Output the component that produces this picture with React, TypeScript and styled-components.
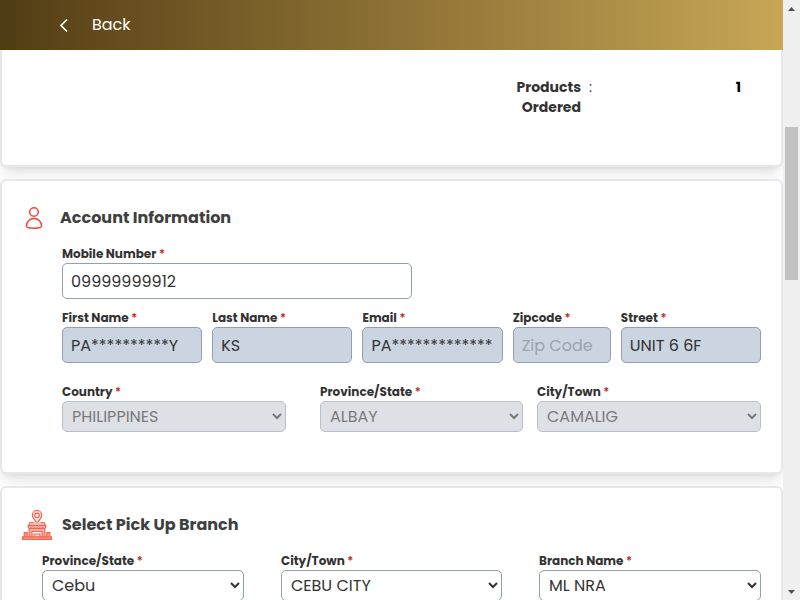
import React, { useId } from "react";
import styled, { createGlobalStyle, css } from "styled-components";

const Global = createGlobalStyle`
  *, *::before, *::after { box-sizing: border-box; }
  html, body { margin: 0; padding: 0; overflow: hidden; }
  body { background: #fff; color: #333; font-family: Poppins, Inter, "Open Sans", sans-serif; }
  button, input, select { font-family: inherit; }
`;

const Shell = styled.div`
  display: flex;
  height: 100vh;
  overflow: hidden;
`;

const Page = styled.div`
  display: flex;
  flex: 1;
  flex-direction: column;
  min-width: 0;
`;

const TopBar = styled.header`
  display: flex;
  flex: none;
  align-items: center;
  height: 50px;
  padding: 0 56px;
  background: linear-gradient(90deg, #4f3c13 0%, #5a4318 6%, #c7a656 100%);
`;

const BackButton = styled.button`
  display: flex;
  align-items: center;
  gap: 20px;
  padding: 0;
  border: 0;
  background: none;
  color: #fff;
  font-size: 16px;
  font-weight: 400;
  line-height: 24px;
`;

const Content = styled.main`
  flex: 1;
  min-height: 0;
  overflow: hidden;
`;

const Card = styled.section<{ $continued?: boolean }>`
  margin: 0 0 12px;
  padding: 22px 20px 40px;
  border: 2px solid #e5e7eb;
  border-radius: 6px;
  background: #fff;
  box-shadow: 0 10px 15px -3px rgba(0, 0, 0, 0.1), 0 4px 6px -4px rgba(0, 0, 0, 0.1);
  ${(p) =>
    p.$continued &&
    css`
      padding: 27px 40px 48px;
      border-top: 0;
      border-top-left-radius: 0;
      border-top-right-radius: 0;
    `}
`;

const SummaryRow = styled.dl`
  display: grid;
  grid-template-columns: 1fr 80px 4px 140px;
  column-gap: 8px;
  margin: 0;
  font-size: 14px;
  line-height: 20px;
`;

const SummaryTerm = styled.dt`
  grid-column: 2;
  font-weight: 700;
  text-align: right;
`;

const SummaryValue = styled.dd`
  margin: 0;
  color: #000;
  font-weight: 700;
  text-align: right;
`;

const CardHeader = styled.div<{ $gap: number }>`
  display: flex;
  align-items: center;
  gap: ${(p) => p.$gap}px;
  height: 30px;
`;

const CardTitle = styled.h2`
  margin: 0;
  color: #404040;
  font-size: 16px;
  font-weight: 700;
  line-height: 24px;
`;

const Fields = styled.div<{ $columns: string; $gap: number; $top?: number; $left?: number }>`
  display: grid;
  grid-template-columns: ${(p) => p.$columns};
  column-gap: ${(p) => p.$gap}px;
  padding: ${(p) => p.$top ?? 10}px 0 0 ${(p) => p.$left ?? 40}px;
`;

const FieldBox = styled.div<{ $inset?: boolean }>`
  display: flex;
  flex-direction: column;
  min-width: 0;
  padding-right: ${(p) => (p.$inset ? 20 : 0)}px;
`;

const Label = styled.label`
  font-size: 12px;
  font-weight: 700;
  line-height: 18px;
  white-space: nowrap;
`;

const Required = styled.span`
  color: #b91c1c;
  font-weight: 500;
`;

const control = css`
  width: 100%;
  border: 1px solid #949eb2;
  border-radius: 5px;
  background: #fff;
  color: #333;
  font-size: 16px;
  font-weight: 400;
  line-height: 24px;
`;

const TextInput = styled.input`
  ${control}
  height: 36px;
  padding: 0 8px;
  &:disabled { background: #cbd5e1; }
  &::placeholder { color: #9ca3af; opacity: 1; }
`;

const Select = styled.select`
  ${control}
  height: 31px;
  padding: 0 6px 0 5px;
  &:disabled { background: #cbd0d7; opacity: 0.65; }
`;

const ScrollTrack = styled.div`
  display: flex;
  flex: none;
  flex-direction: column;
  align-items: center;
  width: 17px;
  padding: 7px 0 6px;
  background: #f0f0f0;
`;

const ScrollArrow = styled.svg`
  display: block;
  flex: none;
`;

const ScrollRail = styled.div`
  flex: 1;
  width: 13px;
  padding-top: 116px;
`;

const ScrollThumb = styled.div`
  height: 153px;
  background: #c1c1c1;
`;

function RequiredLabel({ id, text }: { id: string; text: string }) {
  return (
    <Label htmlFor={id}>
      {text} <Required>*</Required>
    </Label>
  );
}

type TextFieldProps = { label: string; value?: string; placeholder?: string; disabled?: boolean };

function TextField({ label, value = "", placeholder, disabled }: TextFieldProps) {
  const id = useId();
  return (
    <FieldBox>
      <RequiredLabel id={id} text={label} />
      <TextInput id={id} defaultValue={value} placeholder={placeholder} disabled={disabled} />
    </FieldBox>
  );
}

type SelectFieldProps = { label: string; value: string; disabled?: boolean; inset?: boolean };

function SelectField({ label, value, disabled, inset }: SelectFieldProps) {
  const id = useId();
  return (
    <FieldBox $inset={inset}>
      <RequiredLabel id={id} text={label} />
      <Select id={id} defaultValue={value} disabled={disabled}>
        <option value={value}>{value}</option>
      </Select>
    </FieldBox>
  );
}

const ChevronLeft = () => (
  <svg width="16" height="16" viewBox="0 0 16 16" fill="none" stroke="#fff" strokeWidth="1.7" aria-hidden="true">
    <path d="M11 2.500 5 8.500l6 6" />
  </svg>
);

const PersonIcon = () => (
  <svg width="24" height="24" viewBox="0 0 24 24" fill="none" stroke="#ef4444" strokeWidth="1.5" aria-hidden="true">
    <circle cx="12" cy="6" r="4.3" />
    <path d="M4.4 20c0-4 3.3-7.4 7.6-7.4s7.6 3.4 7.6 7.4c0 1.5-3.3 2.2-7.6 2.2S4.4 21.5 4.4 20Z" />
  </svg>
);

const BranchIcon = () => (
  <svg width="30" height="30" viewBox="0 0 30 30" fill="none" stroke="#f4654f" strokeWidth="1.2" aria-hidden="true">
    <path d="M15 13.2c-2.7-3.2-4.7-5.5-4.7-8a4.7 4.7 0 0 1 9.4 0c0 2.5-2 4.8-4.7 8Z" fill="#fdd9d3" />
    <circle cx="15" cy="5.3" r="2.2" fill="#fff" />
    <path d="M11.5 12.5H8l-1.8 3.2v1.6c0 1.6 2.9 1.6 2.9 0 0 1.6 2.9 1.6 2.9 0 0 1.6 3 1.6 3 0 0 1.6 3 1.6 3 0 0 1.6 2.9 1.6 2.9 0 0 1.6 2.9 1.6 2.9 0v-1.6L22 12.5h-3.500M6.200 15.7h17.6" fill="#fbc0b6" />
    <path d="M7.2 19v8H10v-5.500h10V27h2.800v-8" fill="#fbb0a4" />
    <path d="M12 27v-3h6v3" fill="#fdd9d3" />
    <path d="M.6 26.8h28.8v2.6H.6zM2.2 26.600v-4h3v4M24.8 26.600v-4h3v4" fill="#f99b8c" />
  </svg>
);

export default function App() {
  return (
    <Shell>
      <Global />
      <Page>
        <TopBar>
          <BackButton type="button">
            <ChevronLeft />
            Back
          </BackButton>
        </TopBar>
        <Content>
          <Card $continued>
            <SummaryRow>
              <SummaryTerm>Products Ordered</SummaryTerm>
              <span>:</span>
              <SummaryValue>1</SummaryValue>
            </SummaryRow>
          </Card>

          <Card>
            <CardHeader $gap={14}>
              <PersonIcon />
              <CardTitle>Account Information</CardTitle>
            </CardHeader>
            <Fields $columns="1fr 1fr" $gap={0} $top={12}>
              <TextField label="Mobile Number" value="09999999912" />
            </Fields>
            <Fields $columns="140fr 140fr 140fr 98fr 140fr" $gap={10}>
              <TextField label="First Name" value="PA**********Y" disabled />
              <TextField label="Last Name" value="KS" disabled />
              <TextField label="Email" value="PA*************" disabled />
              <TextField label="Zipcode" placeholder="Zip Code" disabled />
              <TextField label="Street" value="UNIT 6 6F" disabled />
            </Fields>
            <Fields $columns="244fr 203fr 224fr" $gap={14} $top={20}>
              <SelectField label="Country" value="PHILIPPINES" disabled inset />
              <SelectField label="Province/State" value="ALBAY" disabled />
              <SelectField label="City/Town" value="CAMALIG" disabled />
            </Fields>
          </Card>

          <Card>
            <CardHeader $gap={10}>
              <BranchIcon />
              <CardTitle>Select Pick Up Branch</CardTitle>
            </CardHeader>
            <Fields $columns="202fr 221fr 222fr" $gap={37} $top={12} $left={20}>
              <SelectField label="Province/State" value="Cebu" />
              <SelectField label="City/Town" value="CEBU CITY" />
              <SelectField label="Branch Name" value="ML NRA" />
            </Fields>
          </Card>
        </Content>
      </Page>
      <ScrollTrack aria-hidden="true">
        <ScrollArrow width="7" height="4" viewBox="0 0 7 4" fill="#505050">
          <path d="M0 4 3.5 0 7 4Z" />
        </ScrollArrow>
        <ScrollRail>
          <ScrollThumb />
        </ScrollRail>
        <ScrollArrow width="7" height="4" viewBox="0 0 7 4" fill="#505050">
          <path d="M0 0h7L3.5 4Z" />
        </ScrollArrow>
      </ScrollTrack>
    </Shell>
  );
}
